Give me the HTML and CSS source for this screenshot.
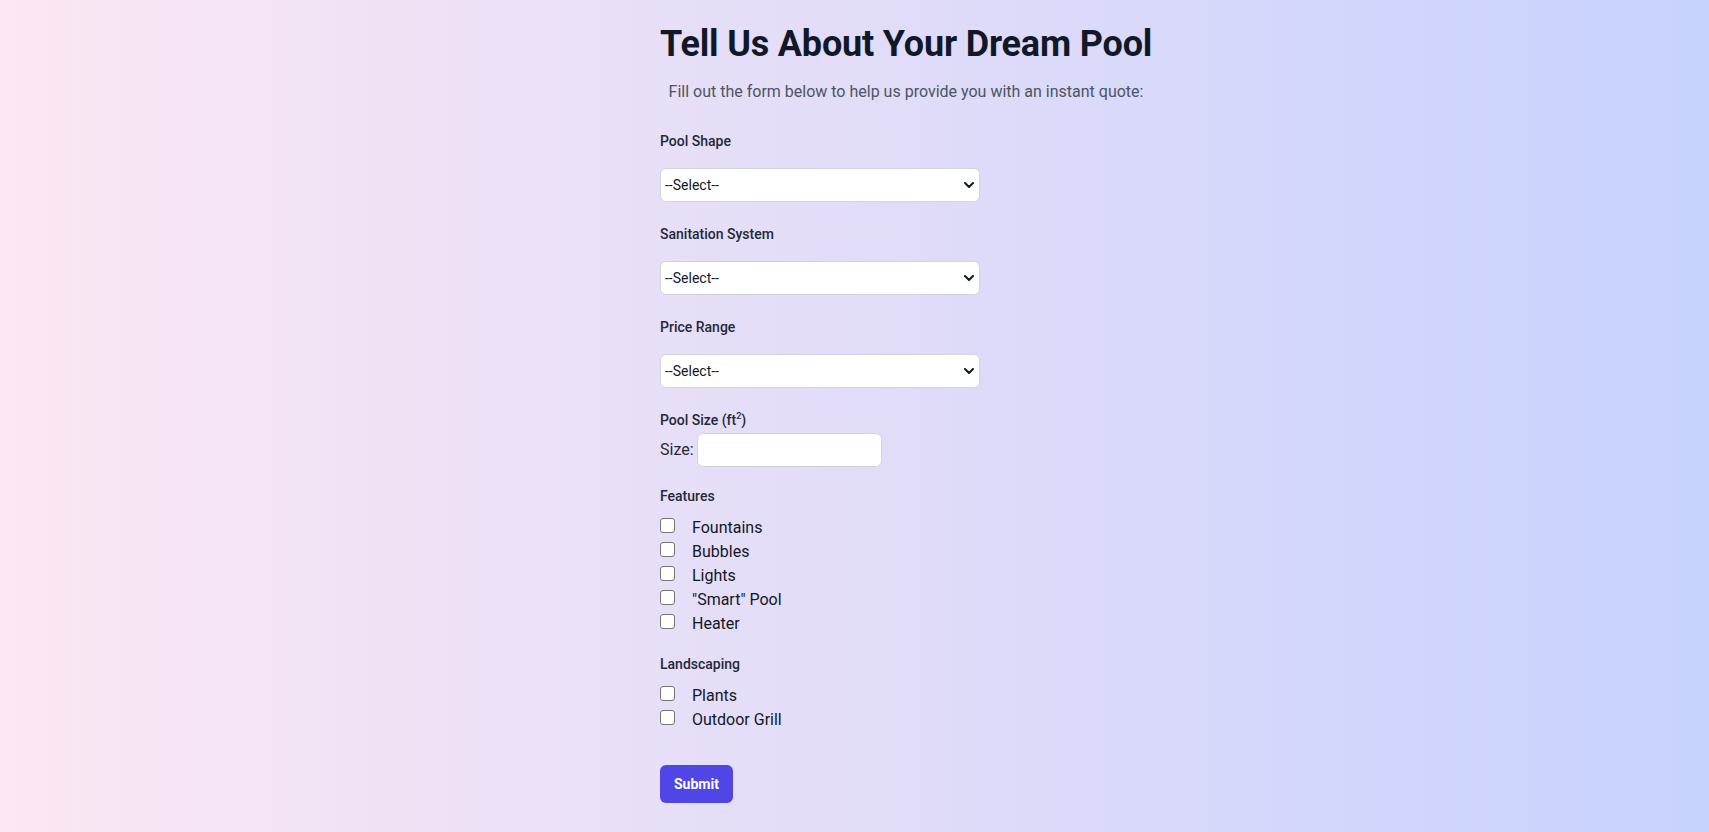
FILE: index.html
```html
<!DOCTYPE html>
<html lang="en">
<head>
<meta charset="utf-8">
<title>Tell Us About Your Dream Pool</title>
<link rel="stylesheet" href="styles.css">
</head>
<body>
<main class="page">
  <div class="wrap">
    <header class="head">
      <h1 class="title">Tell Us About Your Dream Pool</h1>
      <p class="subtitle">Fill out the form below to help us provide you with an instant quote:</p>
    </header>
    <form class="form">
      <div class="group">
        <label class="label" for="shape">Pool Shape</label>
        <div class="select-box">
          <select id="shape" class="select"><option>--Select--</option></select>
          <svg class="chev" width="10" height="6" viewBox="0 0 10 6"><path d="M1 1l4 4 4-4" fill="none" stroke="#111827" stroke-width="2" stroke-linecap="round" stroke-linejoin="round"/></svg>
        </div>
      </div>
      <div class="group">
        <label class="label" for="san">Sanitation System</label>
        <div class="select-box">
          <select id="san" class="select"><option>--Select--</option></select>
          <svg class="chev" width="10" height="6" viewBox="0 0 10 6"><path d="M1 1l4 4 4-4" fill="none" stroke="#111827" stroke-width="2" stroke-linecap="round" stroke-linejoin="round"/></svg>
        </div>
      </div>
      <div class="group">
        <label class="label" for="price">Price Range</label>
        <div class="select-box">
          <select id="price" class="select"><option>--Select--</option></select>
          <svg class="chev" width="10" height="6" viewBox="0 0 10 6"><path d="M1 1l4 4 4-4" fill="none" stroke="#111827" stroke-width="2" stroke-linecap="round" stroke-linejoin="round"/></svg>
        </div>
      </div>
      <div class="group size-group">
        <span class="label tight">Pool Size (ft<sup>2</sup>)</span>
        <div class="size-row">
          <label for="size" class="size-label">Size:</label>
          <input id="size" type="text" class="size-input">
        </div>
      </div>
      <div class="group check-group">
        <span class="label">Features</span>
        <label class="check"><input type="checkbox" class="box"><span>Fountains</span></label>
        <label class="check"><input type="checkbox" class="box"><span>Bubbles</span></label>
        <label class="check"><input type="checkbox" class="box"><span>Lights</span></label>
        <label class="check"><input type="checkbox" class="box"><span>"Smart" Pool</span></label>
        <label class="check"><input type="checkbox" class="box"><span>Heater</span></label>
      </div>
      <div class="group check-group">
        <span class="label">Landscaping</span>
        <label class="check"><input type="checkbox" class="box"><span>Plants</span></label>
        <label class="check"><input type="checkbox" class="box"><span>Outdoor Grill</span></label>
      </div>
      <button type="button" class="submit">Submit</button>
    </form>
  </div>
</main>
</body>
</html>
```
FILE: styles.css
```css
* { box-sizing: border-box; }
html, body { margin: 0; height: 100%; }
body {
  font-family: "Segoe UI", Roboto, "Noto Sans", sans-serif;
  color: #111827;
  background: linear-gradient(to right, #fce7f3, #c7d2fe);
  min-height: 832px;
}
.page {
  display: flex;
  justify-content: center;
  padding-top: 24px;
}
.wrap {
  width: 389px;
}
.head {
  width: 492px;
  text-align: center;
}
.title {
  margin: 0;
  font-size: 36px;
  line-height: 40px;
  font-weight: 700;
  letter-spacing: -0.18px;
  color: #111827;
  white-space: nowrap;
}
.subtitle {
  margin: 16px 0 0;
  font-size: 16px;
  line-height: 24px;
  color: #4b5563;
  white-space: nowrap;
}
.form {
  margin-top: 27px;
  display: flex;
  flex-direction: column;
}
.group {
  display: flex;
  flex-direction: column;
  align-items: flex-start;
  margin-bottom: 22px;
}
.label {
  font-size: 14px;
  line-height: 20px;
  font-weight: 500;
  color: #1f2937;
  margin-bottom: 17px;
}
.label sup { font-size: 9px; line-height: 0; }
.label.tight { margin-bottom: 3px; }
.select-box {
  position: relative;
  width: 320px;
}
.select {
  appearance: none;
  -webkit-appearance: none;
  display: block;
  width: 320px;
  height: 34px;
  padding: 0 24px 0 4px;
  font-family: inherit;
  font-size: 14px;
  color: #111827;
  background: #fff;
  border: 1px solid #d1d5db;
  border-radius: 6px;
}
.chev {
  position: absolute;
  right: 6px;
  top: 14px;
  pointer-events: none;
}
.size-group { margin-bottom: 19px; }
.size-row {
  display: flex;
  align-items: center;
  gap: 3px;
}
.size-label {
  font-size: 16px;
  line-height: 24px;
  color: #1f2937;
}
.size-input {
  width: 185px;
  height: 34px;
  background: #fff;
  border: 1px solid #d1d5db;
  border-radius: 6px;
  font-family: inherit;
  font-size: 14px;
}
.check-group .label { margin-bottom: 10px; }
.check-group { margin-bottom: 18px; }
.check {
  display: flex;
  align-items: flex-start;
  height: 24px;
  font-size: 16px;
  line-height: 24px;
  font-weight: 400;
  color: #111827;
}
.box {
  appearance: none;
  -webkit-appearance: none;
  width: 15px;
  height: 15px;
  margin: 2px 17px 0 0;
  background: #fff;
  border: 1px solid #767676;
  border-radius: 3px;
  flex: none;
}
.submit {
  align-self: flex-start;
  margin-top: 15px;
  height: 38px;
  padding: 0 14px;
  border: 0;
  border-radius: 6px;
  background: #4f46e5;
  color: #fff;
  font-family: inherit;
  font-size: 14px;
  font-weight: 700;
}
```
